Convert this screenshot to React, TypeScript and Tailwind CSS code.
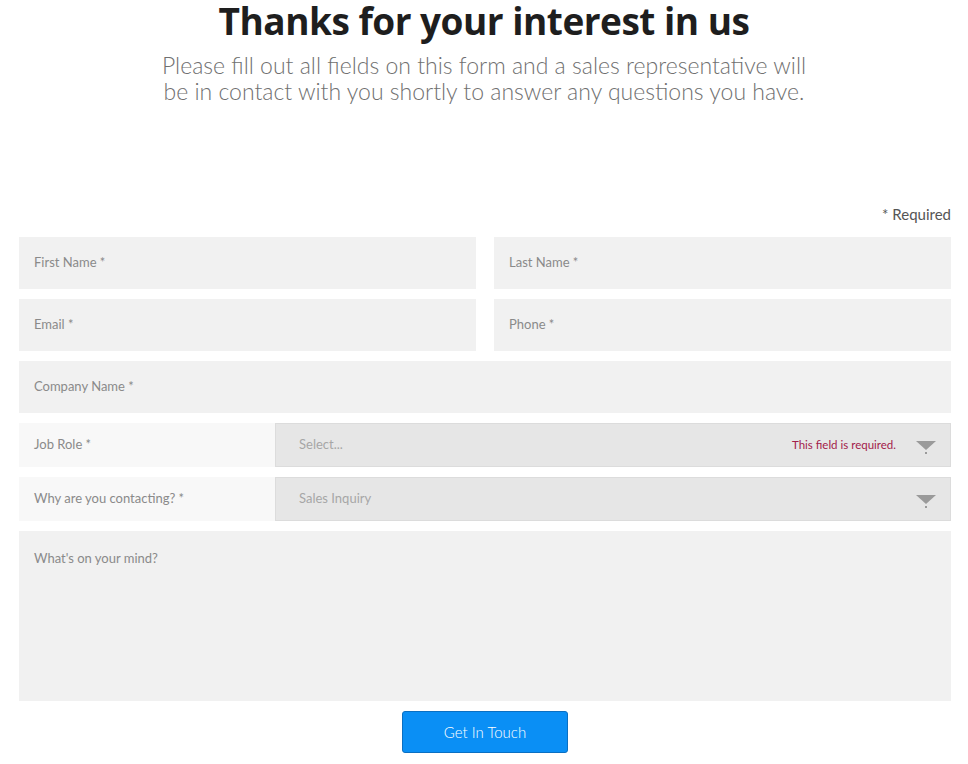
import React from "react";

const font = { fontFamily: '"Lato", "Open Sans", Arial, sans-serif' };

const Arrow = () => (
  <svg width="22" height="16" viewBox="0 0 22 16" className="absolute right-[13px] top-1/2 -translate-y-1/2 mt-[2px]">
    <polygon points="1,2 21,2 11,11" fill="#9a9a9a" />
    <rect x="10" y="13" width="2" height="2" fill="#9a9a9a" />
  </svg>
);

const Input = ({ label, className = "" }: { label: string; className?: string }) => (
  <div className={`bg-[#f1f1f1] h-[52px] flex items-center px-[15px] text-[13px] text-[#8a8a8a] ${className}`}>
    {label}
  </div>
);

const SelectRow = ({ label, value, error }: { label: string; value: string; error?: string }) => (
  <div className="flex h-[44px]">
    <div className="w-[256px] bg-[#f8f8f8] flex items-center px-[15px] text-[13px] text-[#8a8a8a]">{label}</div>
    <div className="relative flex-1 bg-[#e6e6e6] border border-[#dcdcdc] flex items-center pl-[23px] text-[13px] text-[#a6a6a6]">
      {value}
      {error && (
        <span className="absolute right-[54px] top-1/2 -translate-y-1/2 text-[11.5px] text-[#a3204a]">{error}</span>
      )}
      <Arrow />
    </div>
  </div>
);

export default function App() {
  return (
    <div className="bg-white min-h-[764px] w-[968px]" style={font}>
      <div className="text-center">
        <h1
          className="text-[37px] leading-[42px] font-bold text-[#1e1e1e] tracking-[-0.5px]"
          style={{ fontFamily: '"Open Sans", Arial, sans-serif' }}
        >
          Thanks for your interest in us
        </h1>
        <p className="mt-[10px] text-[23px] leading-[26px] font-light text-[#707070] w-[660px] mx-auto">
          Please fill out all fields on this form and a sales representative will be in contact with you shortly to
          answer any questions you have.
        </p>
      </div>

      <div className="pl-[19px] pr-[17px] pt-[101px]">
        <div className="text-right text-[15px] text-[#555] leading-[18px] pb-[14px]">* Required</div>
        <div className="flex flex-col gap-[10px]">
          <div className="grid grid-cols-2 gap-[18px]">
            <Input label="First Name *" />
            <Input label="Last Name *" />
          </div>
          <div className="grid grid-cols-2 gap-[18px]">
            <Input label="Email *" />
            <Input label="Phone *" />
          </div>
          <Input label="Company Name *" />
          <SelectRow label="Job Role *" value="Select..." error="This field is required." />
          <SelectRow label="Why are you contacting? *" value="Sales Inquiry" />
          <div className="bg-[#f1f1f1] h-[170px] px-[15px] pt-[18px] text-[13px] text-[#8a8a8a]">What's on your mind?</div>
        </div>
        <div className="flex justify-center pt-[10px]">
          <button className="w-[166px] h-[42px] rounded-[3px] bg-[#0a8ff5] border border-[#0a6fc2] text-white text-[15px] font-light">
            Get In Touch
          </button>
        </div>
      </div>
    </div>
  );
}
